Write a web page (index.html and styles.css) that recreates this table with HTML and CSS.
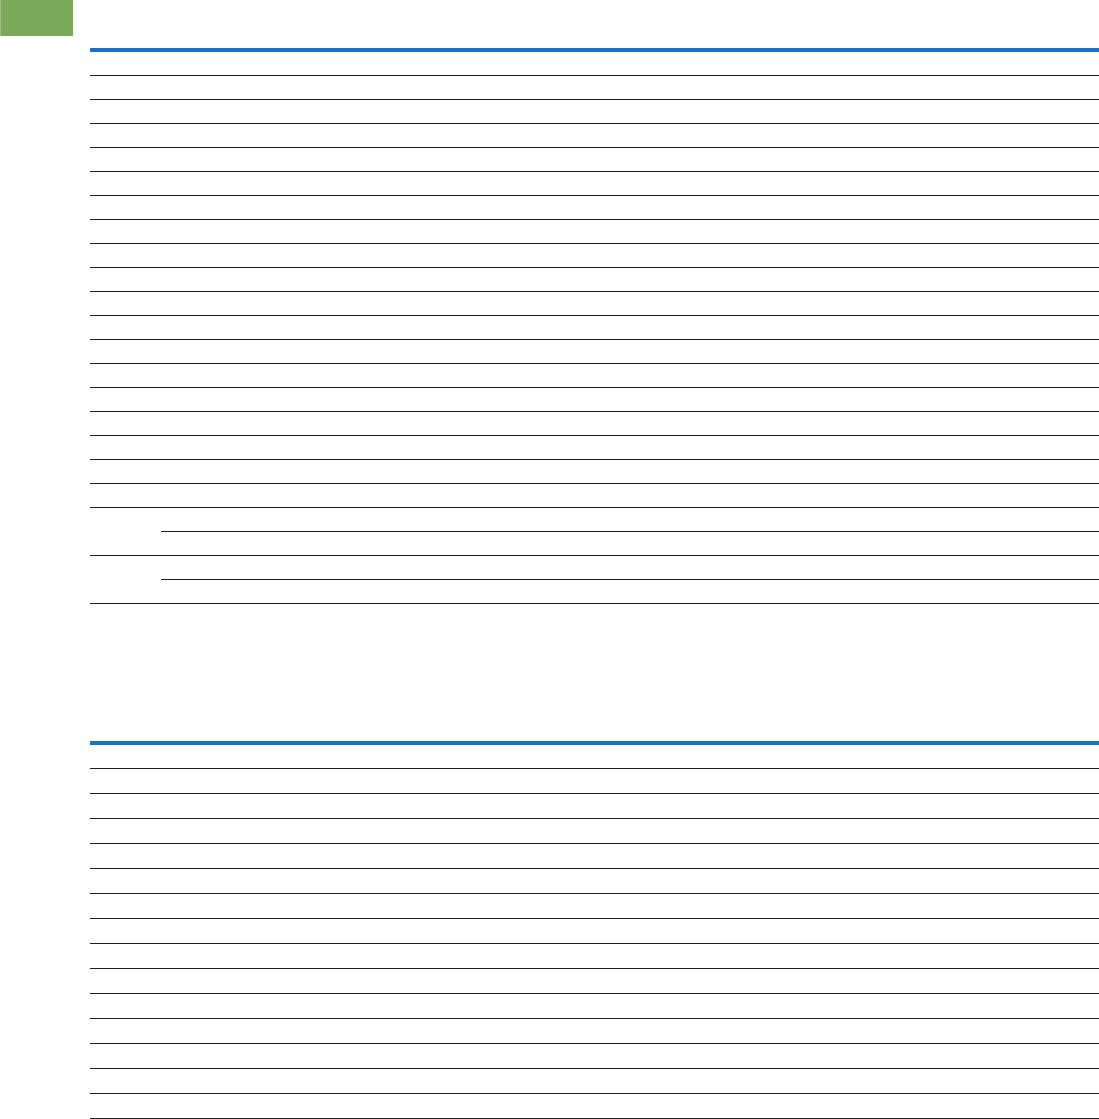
FILE: index.html
```html
<!DOCTYPE html>
<html lang="en">
<head>
  <meta charset="UTF-8" />
  <title>Tables</title>
  <link rel="stylesheet" href="styles.css">
</head>
<body>
  <div class="tab-mark"></div>

  <table class="grid grid-first">
    <colgroup>
      <col class="col-group">
      <col>
    </colgroup>
    <tr class="head"><td colspan="2"></td></tr>
    <tr><td colspan="2"></td></tr>
    <tr><td colspan="2"></td></tr>
    <tr><td colspan="2"></td></tr>
    <tr><td colspan="2"></td></tr>
    <tr><td colspan="2"></td></tr>
    <tr><td colspan="2"></td></tr>
    <tr><td colspan="2"></td></tr>
    <tr><td colspan="2"></td></tr>
    <tr><td colspan="2"></td></tr>
    <tr><td colspan="2"></td></tr>
    <tr><td colspan="2"></td></tr>
    <tr><td colspan="2"></td></tr>
    <tr><td colspan="2"></td></tr>
    <tr><td colspan="2"></td></tr>
    <tr><td colspan="2"></td></tr>
    <tr><td colspan="2"></td></tr>
    <tr><td colspan="2"></td></tr>
    <tr><td colspan="2"></td></tr>
    <tr><td rowspan="2"></td><td></td></tr>
    <tr><td></td></tr>
    <tr><td rowspan="2"></td><td></td></tr>
    <tr><td></td></tr>
  </table>

  <table class="grid grid-second">
    <tr class="head"><td></td></tr>
    <tr><td></td></tr>
    <tr><td></td></tr>
    <tr><td></td></tr>
    <tr><td></td></tr>
    <tr><td></td></tr>
    <tr><td></td></tr>
    <tr><td></td></tr>
    <tr><td></td></tr>
    <tr><td></td></tr>
    <tr><td></td></tr>
    <tr><td></td></tr>
    <tr><td></td></tr>
    <tr><td></td></tr>
    <tr><td></td></tr>
  </table>
</body>
</html>
```

FILE: styles.css
```css
:root {
  --green: #7aaa59;
  --blue: #1774c5;
  --rule: #231f20;
}
* {
  margin: 0;
  padding: 0;
  box-sizing: border-box;
}
body {
  font-family: 'Liberation Sans', Arial, sans-serif;
  background: #fff;
  overflow: hidden;
}
.tab-mark {
  width: 73px;
  height: 36px;
  background: var(--green);
  border-left: 1px solid #9cc083;
}
.grid {
  width: 1009px;
  margin-left: 90px;
  border-collapse: separate;
  border-spacing: 0;
  border-top: 4px solid var(--blue);
  table-layout: fixed;
}
.grid td {
  padding: 0;
  border-bottom: 1px solid var(--rule);
  box-sizing: content-box;
  height: 23px;
}
.grid-first {
  margin-top: 12px;
}
.col-group {
  width: 71px;
}
.grid-second {
  margin-top: 137px;
}
.grid-second td {
  height: 24px;
}
.grid-second .head td {
  height: 23px;
}
```
